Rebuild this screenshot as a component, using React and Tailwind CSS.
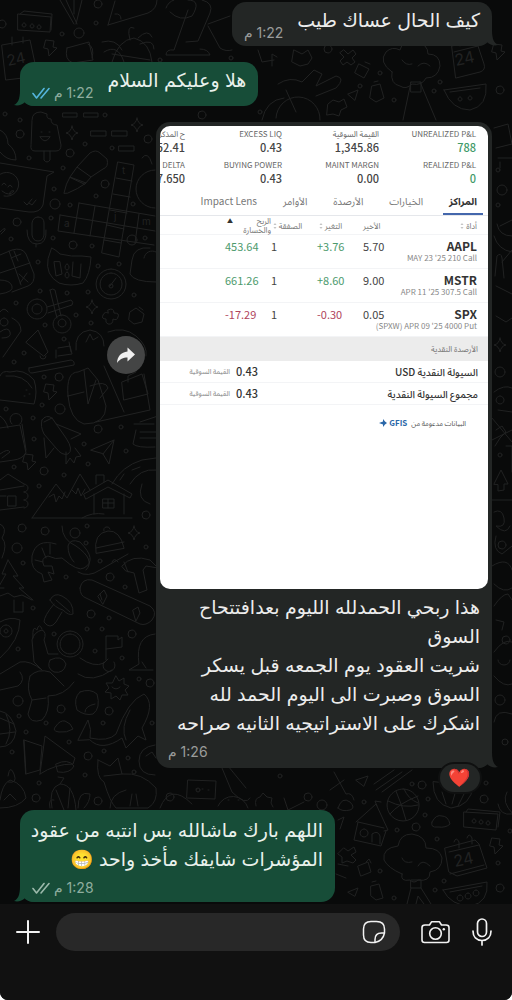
const sparkles = [[72, 133], [137, 125], [92, 307], [134, 533], [500, 345]];

const bolts = [[48, 40], [48, 384], [27, 454], [494, 838], [496, 44]];

const dots = [
  [5, 114, 2], [20, 120, 2], [20, 134, 4], [105, 115, 2], [85, 144, 2], [112, 148, 2], [70, 153, 4], [29, 158, 2],
  [148, 139, 4], [63, 168, 2], [105, 184, 4], [54, 189, 2], [96, 196, 2], [55, 204, 5], [70, 205, 2], [133, 204, 2],
  [17, 222, 4], [51, 218, 2], [11, 239, 2], [53, 238, 2], [73, 245, 4], [92, 246, 2], [132, 240, 5], [145, 238, 2],
  [38, 262, 2], [98, 266, 2], [119, 264, 2], [40, 291, 2], [67, 293, 2], [88, 292, 2], [134, 295, 2], [16, 303, 2],
  [76, 315, 2], [91, 323, 2], [45, 325, 2], [64, 339, 2], [24, 353, 2], [14, 362, 2], [44, 377, 2], [59, 377, 4],
  [42, 405, 2], [60, 409, 5], [6, 409, 2], [33, 418, 2], [98, 429, 4], [121, 427, 2], [34, 439, 2], [84, 444, 2],
  [126, 451, 2], [14, 467, 2], [44, 471, 4], [88, 464, 2], [64, 475, 2], [39, 486, 2], [146, 515, 4], [22, 528, 4],
  [45, 531, 4], [75, 533, 5], [87, 526, 2], [86, 543, 2], [146, 547, 2], [17, 548, 5], [23, 563, 2], [100, 561, 2],
  [110, 577, 4], [66, 577, 2], [125, 587, 2], [33, 608, 2], [91, 614, 4], [109, 618, 2], [87, 629, 2], [102, 629, 2],
  [54, 634, 2], [132, 634, 4], [18, 649, 2], [95, 651, 2], [122, 658, 2], [150, 683, 4], [139, 679, 2], [18, 701, 5],
  [61, 709, 4], [109, 711, 4], [19, 716, 2], [46, 723, 2], [103, 723, 2], [152, 723, 2], [26, 732, 2], [69, 742, 2],
  [12, 752, 2], [88, 756, 4], [104, 751, 2], [128, 758, 2], [134, 772, 2], [39, 783, 2], [85, 775, 2], [36, 798, 4],
  [98, 801, 4], [412, 784, 2], [422, 785, 4], [364, 802, 2], [428, 799, 2], [484, 799, 4], [486, 783, 2], [425, 815, 2],
  [397, 830, 2], [416, 827, 4], [437, 839, 2], [380, 871, 2], [444, 881, 2], [394, 898, 2], [435, 890, 2], [500, 888, 4],
  [498, 863, 2], [510, 831, 2], [98, 4, 4], [96, 23, 2], [62, 34, 2], [79, 33, 5], [2, 24, 4], [328, 49, 4],
  [380, 73, 2], [440, 82, 2], [360, 86, 2], [394, 100, 2], [434, 91, 2], [500, 90, 4], [231, 58, 2], [160, 60, 2],
  [202, 115, 4], [260, 112, 2], [498, 170, 2], [502, 190, 5], [498, 205, 2], [500, 372, 5], [500, 455, 2], [502, 545, 4],
  [506, 640, 4], [500, 700, 5], [505, 742, 3], [170, 797, 4], [308, 797, 4], [322, 805, 5], [280, 776, 2], [198, 790, 2],
];

const doodles = [
  // top strip
  'M18 14l33 3-1 15-32-2zM20 14l4 -3 28 3-1 16M24 23a2 2 0 1 0 .1 0M32 24a2 2 0 1 0 .1 0M39 25a2 2 0 1 0 .1 0',
  'M2 45l28-5 6 28-5 9-25 3zM12 37v8M23 37v6',
  'M60 0l14 24M66 0l11 24M82 0l-6 24M74 0v14',
  'M108 25l7-24M108 25l40-12q9-4 9-13M115 14q6-1 6 5',
  'M67 48l22-6 4 18-20 3q-9-3-6-15zM88 44q7 3 4 14',
  'M104 52q14-9 20 10M102 42q14-4 20 8M130 40q-4-16 4-12M138 38q10-10 14-1M140 44q14-6 14 5M112 62q6-22 22-24q16 4 18 24M112 54l38 6',
  'M166 8q2-6 8-8M170 12q10 10 22 4q10-16-4-16M188 10l-14 40q-8-1-8 5h44q-2-6-10-6M186 42l12-1 12-28q4-10-8-13M208 24l22-8M208 26l12 22q6 4 12 2',
  // between the first two messages
  'M258 50l4 12 12-2M272 66v-12l5 3M294 50l8 4 6-4 4 8-4 6-8 2-8-4zM344 50l4 4 5-4 3 4-4 4 3 4-4 3-4-3-4 3-3-4 4-4-4-4z',
  'M392 72q-14-10-6-20q6-6 14-2q2-10 16-8q12 2 12 12q12 0 12 12q-2 12-14 12q-4 8-14 6q-6 6-12 2q-10-2-8-14zM402 60q4 6 10 4M418 66q6-6 12 0M411 82l-8 38M420 82l16 38M411 82h10v10h-10z',
  'M452 46l24-6 8 24q2 6-4 8l-24 6zM460 38v8M470 36v8M454 52l24-6',
  'M444 90l42-6q2 22-16 26-18 0-26-20zM450 92l30-4M460 97a2 2 0 1 0 .1 0M470 96a2 2 0 1 0 .1 0',
  'M359 64l10 5-5 9-9-5zM365 62l5 2M372 86l8-2 4 14-8 4-6-4zM374 82l4-1M348 94l10-4-3 10zM278 84q12-8 24-2l12-12 8 4-6 12 20-10q10 2 0 12l-20 8M262 120q4-20 22-22M276 118a22 22 0 0 1 44 2M296 112l-10-22M328 104l5-4 6 2 5-3 3 8-6 3-2 6-6-2-6 1z',
  // popsicle and pills
  'M32 120q0-8 9-8l6 2q-1 5 4 5 0 6 6 6l4 20q0 6-5 6h-21q-5 0-4-6zM44 151v9q3 4 6 0v-9M40 137q5 8 10 0zM41 132h1M49 132h1',
  'M63 113h14v4h-14zM84 113h14v4h-14zM91 131h15v5h-15zM112 131h15v5h-15zM119 146h15v5h-15zM0 130q8 4 8 14 8 6 8 16-10 0-16-8',
  // letter and marker
  'M0 163l54 9-7 4-4 29q-3 8-14 7L0 208M-2 176a12 12 0 1 1 6 20M2 185q2-4 4 0M8 187q2-4 4 0M2 191q7 6 12 0a3 3 0 0 0-4 4M24 202l3 3 5-6M29 203l3 2 4-5',
  'M64 193q2-10 6-16l16 6q-8 6-18 10zM70 177l7-10 14 10-6 7zM77 167l13-14q6-4 10 0l7 6q2 8-4 10l-12 8',
  // crossword
  'M118 162l16 3-15 92-17-4zM116 178l16 3M113 194l17 3M110 210l17 3M107 225l17 4M104 240l17 3M79 203l76 13M60 215l95 16M60 215l-2 16 96 14M79 203l-5 30M95 206l-5 30M139 214l-4 29',
  // microphone, calculator
  'M38 217q6 0 6 6v12q-1 6-6 6t-6-6v-12q1-6 6-6zM27 230q0 14 10 14t9-14M36 244v3M0 232q6-6 5-2l-4 4',
  'M0 255l12-5q10-3 14 4l8 20q1 9-6 12l-16 6M9 251l12 34M0 273l30-10M11 258l10-4M14 251l4 10M19 274l9 8M27 273l-7 10M0 280q10 0 12 6t-12 8',
  // cat face, gauge
  'M52 248q4 2 8 6 12 3 22 2l9 1q-1 18-8 26-12 4-24 0-14-8-11-24zM54 262l2 14 6-2-2-12zM73 262l-1 14 8 2 1-14M67 264a2 3 0 1 0 .1 0M67 272a2 3 0 1 0 .1 0',
  'M111 269a15 15 0 1 0 .1 0M111 273a11 11 0 1 0 .1 0M110 286l6-8M109 286a2 2 0 1 0 4 0a2 2 0 1 0-4 0',
  // scissors and friends
  'M37 299a10 10 0 1 0 .1 0M37 304a5 5 0 1 0 .1 0M62 315a9 9 0 1 0 .1 0M62 319a4 4 0 1 0 .1 0M47 307l24-7q3 2 1 5l-24 8M50 290q3-2 5 0l6 26M50 290l7 28',
  'M108 310q6-3 6 3 6 0 4 4-1 4-5 2 0 6-5 5-3-1-2-5-5 0-3-4t5-2zM130 312l6-4 8 6-2 8-8 2-5-4zM139 307l4 3',
  'M0 312q4-6 8 0M4 318a4 4 0 1 0 .1 0M12 318q9 4 9 13l-18 26M0 332q8-6 10 0t-8 6M26 342l12-12 10 22-4 4zM40 356a3 3 0 1 0 6 0',
  'M76 350q-2-18 14-20 14 2 14 16M86 342l4-8 3 6 5-3M108 332q16-6 28 4t10 20M58 348l12-2 2 8-14 2M150 248q-16-2-18 12l-2 14q4 8 26 8M144 258a8 8 0 0 1 12-6M142 158q6-8 10 6M155 170a16 16 0 0 0 0 38',
  // taco, cake and figure
  'M0 376q2-6 10-4 14-4 24 8 4 12 0 24L0 400M6 376q18-2 26 12M26 390h1M24 396h1M29 394h1',
  'M29 368l42-8q4 1 3 5l-42 8q-4 0-3-5zM56 358v-8M71 352l-2-10',
  'M68 396q-2-24 10-24l10-4 10 12 8 26q0 18-22 18-14-4-16-28zM68 396l16-4M84 370l4 34 8-24M90 386q16-6 18 2l-8 10M96 422l54-12-6-36M104 366l20 46M122 382l20-8 6 20-24 6zM128 382v-6l8-4',
  // shuttle, mug, plane
  'M42 420q4-6 10-2l14 20q8 12 2 16-6 2-12-6l-12-14q-4-8-2-14zM56 424l25 10-10 5M44 438l2 20 8-10M66 452l0 12 4-6 4 5 2-6 5-1-6-8M44 422l8-4',
  'M0 428l20-3 6 28q-4 6-12 7L0 462M0 416q6 4 8 12M12 424a6 6 0 1 1 8 0M22 424l4 26M0 454q8-6 10-2l-8 6',
  'M91 450l23-10-5 24-6-10zM103 454l11-14M140 422l18-6M134 424h20M136 430l-3 14q4 4 22 3M140 432h18M140 438h16',
  // mountains and hut
  'M32 518l24-34 11 14 13-24 10 16M49 497l5-3 2 8 3-6 3 3 3-7M72 490l4 4 2-6 3 8 4-7M32 518h100M84 494l24-14 24 14-2 4-22-11-22 12zM94 494v20M124 494v20M96 484v-9h8v7M103 499h11v9h-11zM108 499v9M103 503h11M82 518q10-6 22-4M112 484q10-18 30-24l14-2M130 484q10-16 26-14M120 480l4-6M132 470l8-3M142 484q-6 16 8 20',
  'M0 480l8-6 16 10M0 490l24-4M24 484a3 3 0 1 1 0 8M24 492a3 3 0 1 1 0 8M24 500a3 3 0 1 1 0 8M0 510l24-3M8 496h8v10h-8zM0 496h6',
  // shrimp, beanie, hammer
  'M56 544q-20-6-24 12-2 14 10 18l2 8 8-2-4-8 6 2-2-8-8 0q-4-8 4-10 8 4 14 2 16 14 22 10 14-8-4-26-10-4-12 4 0 10 6 16M42 548l4 10M50 544l0 10M35 560l8 2M62 526q0 14 14 20 20 14 10 24',
  'M96 553q-3-20 12-22 12-1 16 17zM96 548l28-6M104 531a3 3 0 1 1 6-2M78 572q10 6 22-2l28-16M112 562q2-5 6 0M0 524q8 4 2 14 6 6 0 20',
  'M122 566q10-12 28-6l8 8-12-2-3 4 4 20-8 3-5-20-8-2zM124 562l4 10',
  // tree and board
  'M8 560l-6 14h4l-8 14h6M8 560l10 16h-5l11 12h-5l14 12M0 596l8-3 6 4 8-2 10 5M14 600l0 12M14 612h9v-10',
  'M80 588q2-10 12-8l58 26q8 6 2 14-6 6-12 4L86 598q-6-2-6-10zM98 596l6-6 3 6-4 8zM133 610l5-3 2 6-4 8zM100 594l2 6',
  // rocket, mushroom
  'M0 622q10-6 20-2 0 20-20 38M6 625a6 6 0 1 0 .1 0M6 629a2 2 0 1 0 .1 0',
  'M50 600q4-8 12-4 12 6 11 18-4 2-10-4-8-2-13-10zM54 604q-10 12-10 18 6 8 12 0l6-10M56 600l14 12',
  // astronaut
  'M70 631a13 13 0 1 0 .1 0M70 634a10 10 0 1 0 .1 0M58 654h-10l-4-14q3-8-2-10-8 2-10 10l2 22 8 8M33 638q-1-14 4-8 2-8 5-1M50 660q12-6 16 4-2 10-12 8-8-4-4-12M80 658q14 10 24 5l4-4M78 674q14 10 34-4M104 662a6 6 0 1 0 10 0M30 676q8-8 20-4l14 14M30 676q-4 14 2 24l-4 14q2 10 14 6 8-8 6-24 16 0 26-14M32 700l14-2M0 674l20-12q10-2 22 8M20 672q6 8-2 14l-18 4M106 660v-24h12v4l4-3v10l-16 2',
  'M116 676l3 5 5-3 0 6 5 2-4 4 3 5-6 0-2 5-4-4-5 3 0-6-6-1 4-4-3-5 6 0zM112 687q4 4 8 0',
  // marshmallow, whale, cloud
  'M80 692q10-4 17 2 4 14-4 20-8 2-16-4-4-12 3-18zM85 712q0-6 10-8M56 726q4-6 9-5 6 2 8 8-6 4-14 3-8-1-3-6z',
  'M78 740l10-20q4 10 2 18 18 4 26-4 12-34 28-40 12 10-2 34l4 12-8-4q-8 8-12 12l-4-10q-20 14-32 2zM130 710q-10 18-4 30',
  'M0 711q12 2 16 20-2 16-16 16M0 718l14 6M6 714q8 16 0 30M0 734l15-2M155 634q-20 2-16 30l-10 6 24 0M142 662l4 6',
  // megaphone, dog, cactus, star badge
  'M24 740l18 6-2 24-14 4zM24 740l2 34M40 774l5-38 30 22-2 6q-18 0-33 10zM56 764q12-6 18 2-4 8-16 6z',
  'M0 800q2-16 10-20 14 4 16 18-8 10-26 10M8 776q2-12 6-2t-6 8M4 800l6-6 6 6M98 760l12 6 8-8 4 16q20-2 34 14 2 14-8 20H116q-6-6-12-26-8-4-6-22zM104 776l18-2M130 806l2-12M138 806l-2-12',
  'M155 745q-16 2-16 16t16 14M146 756l6-4 4 6M52 808q-4-20 8-24 14 0 16 26M60 784l4-6-6-1M56 790l8 20M70 788l-2 20M78 808q0-18 12-14 0 8-6 14M50 808q-2-10 4-8',
  // behind and below the reaction
  'M334 772l12 22q6-2 8 6M330 790l14-10M356 780l12-4-4 10zM376 790l26-18M382 792l30-22M374 784l20-14M433 782q0 22 18 26 20-2 22-22zM442 792l4 12M456 790l-4 14M466 790l-8 16',
  'M403 789a16 16 0 1 0 .1 0M388 801q16 8 30 4M396 791q6 14 10 29M390 814q8-10 28-18M404 789q4 10 14 14',
  'M356 822l20-18 12 26-4 1M358 822l26 6M358 822l-4 18 27 6 5-15M364 829a4 4 0 1 0 .1 0M372 842v-8q6-4 8 2v8M377 806l-2-5 6 1',
  'M338 808q4-12 12-6 6 6 0 8-8 2-12-2zM432 822q4-8 10-6 6 0 8 8-4 4-12 3-8 1-6-5zM464 812l34 2-2 16-32-3zM466 812l2-3 32 3-2 15M474 819a2 2 0 1 0 .1 0M481 820a2 2 0 1 0 .1 0M488 821a2 2 0 1 0 .1 0',
  'M402 874q-14-6-18-14-2-12 14-14 2-12 14-12 14 2 14 14 14 0 16 10 0 12-12 14 0 10-12 8-4 4-8 0-10 2-8-6zM402 858q2 6 10 4M418 866q4-8 12 0M411 880h10v8h-10zM411 888l-4 16M421 888l10 16M416 904l2-8 6 8',
  'M445 848l30-8 4 4 8 24-30 8-8-4zM454 842q2-6 5 0v6M467 838q2-6 5 0v6M449 852l30-7M450 874l34-9',
  'M443 890l44-8q2 20-16 24-20 0-28-16zM450 892l32-6M460 895a3 3 0 1 0 .1 0M468 893a3 3 0 1 0 .1 0M476 890a3 3 0 1 0 .1 0',
  'M344 848l4 3 6-4 2 5-5 3 5 5-3 3-6-2-5 2 0-6-4-3zM358 866l10-4 3 10-10 4zM366 862l3-3 2 4M371 886l8-2 4 14-7 2-5-4zM372 882l4-1M348 892l10-4-3 8zM338 864l10 2M336 874l10 4M507 792q-6 10 6 22M498 804q2 12 14 10M338 820l6-3-4 12',
  'M188 780l28 1-1 18-28-1zM196 789h1M202 789h1M208 790h1M222 768l10 24q14 14 18 6M228 766l18 22M256 806q-2-8 4-9l3-4 4 4 5 1-1 5 2 4M110 808q0-14 16-18M160 808q10-26 32-4M218 806a16 16 0 0 1 30 2M228 800h1M238 800h1M284 798l4 12 16-8',
  // right edge
  'M494 128l14-4 4 20-16 4M498 158h14M500 162v6M497 224q2 12 15 12M494 236q4 14 18 16M500 226l12-6M495 276l2-20q4-4 5 2l2 20M502 262l10-12M496 286l16 8M496 316l10 6 6-4M494 392q10-8 18-4M498 410l14 2M492 440l20-10M496 430l6-4 4 6-6 6-5 8M500 396a4 4 0 1 0 .1 0M492 418l20 24M494 484l7-14 7 14h-4v6l-6 1v-6zM506 446h6v26M492 500h20M494 512q8-4 10 6t-8 8q10 10 14 0M496 536q-4 14 6 18l10-8M492 566q16-10 20 4M494 584q10 10 18 4M494 606q8-12 14-12l4 6M496 620l8 2-2 8M494 652q10-14 18-10M498 660a6 5 0 1 0 12 0M494 676q10 12 18 8M494 722q2-14 18-8',
];

function Wallpaper() {
  return (
    <svg
      direction="ltr"
      className="absolute inset-0 h-full w-full"
      viewBox="0 0 512 1000"
      preserveAspectRatio="xMidYMin slice"
      fill="none"
      stroke="#212222"
      strokeLinecap="round"
      strokeLinejoin="round"
      aria-hidden="true"
    >
      {doodles.map((d) => (
        <path key={d} d={d} />
      ))}
      {dots.map(([x, y, r]) => (
        <circle key={`${x}-${y}`} cx={x} cy={y} r={r} />
      ))}
      {sparkles.map(([x, y]) => (
        <path key={`${x}-${y}`} d={`M${x} ${y - 7}q1 6 6 7q-5 1-6 7q-1-6-6-7q5-1 6-7z`} />
      ))}
      {bolts.map(([x, y]) => (
        <path key={`${x}-${y}`} d={`M${x - 2} ${y}l8 1-1 6 4 1-8 8-1-7-4-1z`} />
      ))}
      <g fill="#212222" stroke="none" fontFamily="Inter, sans-serif" direction="ltr">
        <text x="8" y="66" fontSize="15" transform="rotate(-12 8 66)">24</text>
        <text x="456" y="66" fontSize="16" transform="rotate(-12 456 66)">24</text>
        <text x="455" y="867" fontSize="16" transform="rotate(-12 455 867)">24</text>
        <text x="122" y="174" fontSize="10">t</text>
        <text x="114" y="220" fontSize="10">j</text>
        <text x="64" y="227" fontSize="10">a</text>
        <text x="142" y="225" fontSize="10">m</text>
      </g>
    </svg>
  );
}

function Ticks({ className }) {
  return (
    <svg className={`h-3 w-[18px] ${className}`} viewBox="0 0 18 12" fill="none" stroke="currentColor" strokeWidth="1.6" strokeLinecap="round" strokeLinejoin="round" aria-hidden="true">
      <path d="M1 6.5l3.5 4.5L12 1.5" />
      <path d="M9 11L17 1.5" />
    </svg>
  );
}

function Time({ children, ticks }) {
  return (
    <span className="flex items-center gap-1 text-sm leading-5">
      <span>{children}</span>
      {ticks && <Ticks className={ticks} />}
    </span>
  );
}

function Bubble({ out, className, children }) {
  const look = out ? 'self-end bg-[#174d38] text-[#e9f1ec]' : 'self-start bg-[#232625] text-[#ececec]';
  return (
    <div className={`relative rounded-[14px] ${look} ${className}`}>
      <svg
        className={out ? 'absolute bottom-0 -left-1.5 h-4 w-5 text-[#174d38]' : 'absolute bottom-0 -right-1.5 h-4 w-5 -scale-x-100 text-[#232625]'}
        viewBox="0 0 20 16"
        fill="currentColor"
        aria-hidden="true"
      >
        <path d="M6 0C6 9 4 13 0 15C4 16 8 15 11 12C14 15 17 16 20 16V0Z" />
      </svg>
      <div className="relative">{children}</div>
    </div>
  );
}

function Sort() {
  return (
    <svg className="inline h-1.5 w-1" viewBox="0 0 4 6" fill="#c4c4c4" aria-hidden="true">
      <path d="M2 0l1.500 2h-3zM2 6L.5 4h3z" />
    </svg>
  );
}

const metrics = [
  { label: 'UNREALIZED P&L', value: '788', color: 'text-[#3f9a68]' },
  { label: 'القيمة السوقية', value: '1,345.86' },
  { label: 'EXCESS LIQ', value: '0.43' },
  { label: 'ح المذكرة', value: '52.41' },
  { label: 'REALIZED P&L', value: '0', color: 'text-[#3f9a68]' },
  { label: 'MAINT MARGN', value: '0.00' },
  { label: 'BUYING POWER', value: '0.43' },
  { label: 'DELTA', value: '7.650' },
];

const tabs = ['المراكز', 'الخيارات', 'الأرصدة', 'الأوامر', 'Impact Lens'];

const positions = [
  { symbol: 'AAPL', contract: "MAY 23 '25 210 Call", last: '5.70', change: '+3.76', qty: '1', pnl: '453.64', color: 'text-[#4c9a6c]' },
  { symbol: 'MSTR', contract: "APR 11 '25 307.5 Call", last: '9.00', change: '+8.60', qty: '1', pnl: '661.26', color: 'text-[#4c9a6c]' },
  { symbol: 'SPX', contract: "(SPXW) APR 09 '25 4000 Put", last: '0.05', change: '-0.30', qty: '1', pnl: '-17.29', color: 'text-[#b0445c]' },
];

const cash = ['السيولة النقدية USD', 'مجموع السيولة النقدية'];

function Portfolio() {
  return (
    <div className="h-[463px] overflow-hidden rounded-[10px] bg-white pt-0.5 font-['Noto_Sans_CJK_SC','Noto_Sans_Arabic',sans-serif] text-[#444]">
      <dl className="grid grid-cols-[repeat(4,97px)] gap-y-[5px] pr-3 whitespace-nowrap">
        {metrics.map((m) => (
          <div key={m.label}>
            <dt className="text-[8px] leading-3 text-[#666]">{m.label}</dt>
            <dd className={`text-[11px] leading-[14px] font-medium ${m.color || ''}`}>{m.value}</dd>
          </div>
        ))}
      </dl>

      <nav className="mt-0.5 flex gap-3.5 border-b border-gray-200 pr-[5px] text-[10px] leading-4 text-[#777]">
        {tabs.map((tab, i) => (
          <a
            key={tab}
            href="#"
            className={i === 0 ? 'border-b-2 border-[#4467ac] px-1.5 pt-1.5 pb-1 font-bold text-[#333]' : 'px-1.5 pt-1.5 pb-1'}
          >
            {tab}
          </a>
        ))}
      </nav>

      <table className="w-full table-fixed border-collapse text-[11px] leading-3">
        <colgroup>
          <col className="w-[98px]" />
          <col className="w-[27px]" />
          <col className="w-[46px]" />
          <col className="w-[46px]" />
          <col className="w-[46px]" />
          <col />
        </colgroup>
        <thead>
          <tr className="h-[18px] border-b border-gray-100 text-[8px] leading-[9px] whitespace-nowrap text-[#777]">
            <th className="py-0 pr-[11px] text-right font-normal">أداة <Sort /></th>
            <th className="p-0 text-left font-normal">الأخير</th>
            <th className="py-0 pl-0.5 text-left font-normal">التغير <Sort /></th>
            <th className="py-0 pl-0.5 text-left font-normal">الصفقة <Sort /></th>
            <th className="p-0 font-normal">
              <span className="flex items-start justify-between">
                <span className="text-right">الربح<br />والخسارة</span>
                <span className="pl-0.5 text-[6px] text-[#333]">▲</span>
              </span>
            </th>
            <th className="p-0" aria-label="المزيد" />
          </tr>
        </thead>
        <tbody>
          {positions.map((p) => (
            <tr key={p.symbol} className="h-[34px] border-b border-gray-100 align-top whitespace-nowrap">
              <td className="pt-[5px] pr-[11px]">
                <div className="text-xs leading-3 font-bold text-[#333]">{p.symbol}</div>
                <div className="text-[8px] text-[#888]"><bdi>{p.contract}</bdi></div>
              </td>
              <td className="pt-[5px] text-left">{p.last}</td>
              <td className={`pt-[5px] text-left ${p.color}`} dir="ltr">{p.change}</td>
              <td className="pt-[5px] text-left">{p.qty}</td>
              <td className={`pt-[5px] text-left ${p.color}`} dir="ltr">{p.pnl}</td>
              <td />
            </tr>
          ))}
        </tbody>
      </table>

      <h3 className="bg-[#ececec] py-1 pr-2.5 text-[8px] leading-4 text-[#777]">الأرصدة النقدية</h3>
      {cash.map((name) => (
        <div key={name} className="flex h-[22px] items-center border-b border-gray-100 pr-2.5 text-[10px]">
          <span className="w-[220px] font-medium text-[#333]">{name}</span>
          <span className="text-[11px] font-medium text-[#333]">0.43</span>
          <span className="pr-1.5 text-[7px] text-[#888]">القيمة السوقية</span>
        </div>
      ))}
      <p className="flex items-center gap-1 pt-2.5 pr-[22px] text-[7px] leading-4 text-[#555]">
        البيانات مدعومة من
        <span className="flex items-center gap-0.5 text-[8px] font-bold text-[#2a67a8]" dir="ltr">
          <svg className="h-2 w-2" viewBox="0 0 8 8" fill="currentColor" aria-hidden="true">
            <path d="M4 0l2 2.500L8 4 6 5.500 4 8V5.500L0 4l4-1.500z" />
          </svg>
          GFIS
        </span>
      </p>
    </div>
  );
}

function Composer() {
  return (
    <footer dir="ltr" className="relative flex min-h-24 items-start bg-[#111] pt-[9px] pr-5 pb-12 pl-4 text-[#f2f2f2]">
      <button type="button" aria-label="إرفاق" className="flex h-[38px] items-center">
        <svg className="h-6 w-6" viewBox="0 0 24 24" fill="none" stroke="currentColor" strokeWidth="2" strokeLinecap="round" aria-hidden="true">
          <path d="M12 1v22M1 12h22" />
        </svg>
      </button>
      <div className="ml-4 flex h-[38px] flex-1 items-center rounded-full bg-[#282828] pr-3.5 pl-4">
        <input type="text" aria-label="رسالة" dir="rtl" className="min-w-0 flex-1 bg-transparent text-base outline-none" />
        <button type="button" aria-label="ملصقات">
          <svg className="h-6 w-6" viewBox="0 0 24 24" fill="none" stroke="currentColor" strokeWidth="1.5" strokeLinejoin="round" aria-hidden="true">
            <path d="M13 22.500H9C4 22.500 1.500 20 1.500 15V9C1.500 4 4 1.500 9 1.500h5.500c5 0 8 2.500 8 7.500v4C21.500 18 18 21.500 13 22.500z" />
            <path d="M13 22.500v-3c0-4 2.500-6.500 6.500-6.500h3" />
          </svg>
        </button>
      </div>
      <button type="button" aria-label="الكاميرا" className="ml-[21px] flex h-[38px] items-center">
        <svg className="h-6 w-[29px]" viewBox="0 0 29 24" fill="none" stroke="currentColor" strokeWidth="1.600" strokeLinejoin="round" aria-hidden="true">
          <path d="M4 5h4.500l2-3.200h8L20.500 5H25c2 0 3 1 3 2.500V20c0 1.500-1 2.500-2.500 2.500h-22C2 22.500 1 21.500 1 20V7.500C1 6 2 5 4 5z" />
          <circle cx="14.500" cy="13.500" r="5.800" />
          <circle cx="22.800" cy="9.200" r="1.200" fill="currentColor" stroke="none" />
        </svg>
      </button>
      <button type="button" aria-label="تسجيل صوتي" className="ml-[22px] flex h-[38px] items-center">
        <svg className="h-7 w-5" viewBox="0 0 20 28" fill="none" stroke="currentColor" strokeWidth="1.700" strokeLinecap="round" aria-hidden="true">
          <rect x="5.500" y="1" width="9" height="17.500" rx="4.500" />
          <path d="M1 13c0 6 3.500 9.500 9 9.500s9-3.500 9-9.500M10 22.500V27" />
        </svg>
      </button>
    </footer>
  );
}

export default function App() {
  return (
    <div className="bg-white">
      <div
        dir="rtl"
        className="relative flex min-h-screen flex-col overflow-hidden rounded-b-lg bg-[#090a0a] font-['Inter','Noto_Color_Emoji','DejaVu_Sans',sans-serif]"
      >
        <Wallpaper />
        <main className="relative flex flex-1 flex-col px-5 pt-0.5 text-[19px] leading-[29px]">
          <Bubble className="px-3 pt-1 pb-[3px]">
            <div className="flex items-end gap-3.5">
              <p className="pb-2">كيف الحال عساك طيب</p>
              <div className="text-[#9a9c9b]"><Time>1:22 م</Time></div>
            </div>
          </Bubble>

          <Bubble out className="mt-4 px-3 pt-1 pb-[3px]">
            <div className="flex items-end gap-3.5">
              <p className="pb-2">هلا وعليكم السلام</p>
              <div className="text-[#8fae9f]"><Time ticks="text-[#54b5dc]">1:22 م</Time></div>
            </div>
          </Bubble>

          <div className="mt-4 flex items-start gap-[11px]">
            <Bubble className="w-[336px] p-1">
              <Portfolio />
              <p className="px-2 pt-1 whitespace-pre-line">
                {'هذا ربحي الحمدلله الليوم بعدافتتحاح السوق\nشريت العقود يوم الجمعه قبل يسكر السوق وصبرت الى اليوم الحمد لله\nاشكرك على الاستراتيجيه الثانيه صراحه'}
              </p>
              <div className="flex justify-end px-2 pt-1 pb-0.5 text-[#9a9c9b]"><Time>1:26 م</Time></div>
              <span className="absolute -bottom-7 right-2 flex h-7 w-10 items-center justify-center rounded-full bg-[#232625] text-lg leading-none ring-2 ring-[#0f1010]">❤️</span>
            </Bubble>
            <button type="button" aria-label="إعادة توجيه" className="mt-[214px] flex h-[38px] w-[38px] shrink-0 items-center justify-center rounded-full bg-[#444545] text-[#f0f0f0]">
              <svg className="h-5 w-5" viewBox="0 0 20 20" fill="currentColor" aria-hidden="true">
                <path d="M11.500 2.500L19 9.500l-7.500 7v-4C7 12.500 4 14 1 18c.3-6.500 4-10.800 10.500-11.500z" />
              </svg>
            </button>
          </div>

          <Bubble out className="mt-[42px] w-[315px] pt-1.5 pr-3 pb-1 pl-1">
            <p>
              اللهم بارك ماشالله بس انتبه من عقود<br />
              المؤشرات شايفك مأخذ واحد 😁
            </p>
            <div className="flex justify-end pt-1 pl-2 text-[#8fae9f]"><Time ticks="text-[#9bb8aa]">1:28 م</Time></div>
          </Bubble>
        </main>
        <Composer />
      </div>
    </div>
  );
}
